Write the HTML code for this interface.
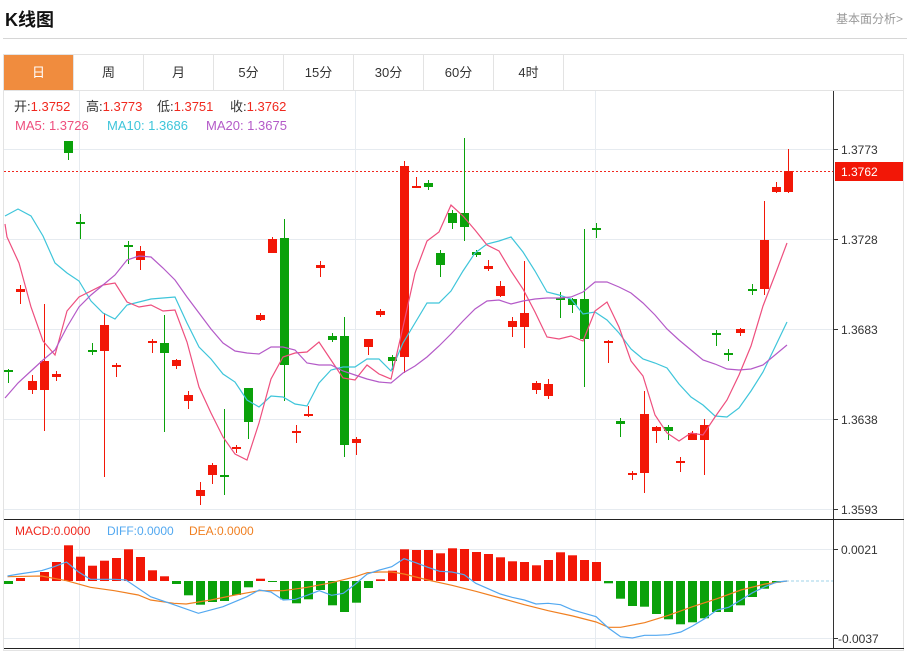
<!DOCTYPE html>
<html><head><meta charset="utf-8"><style>
*{margin:0;padding:0;box-sizing:border-box}
body{width:913px;height:651px;background:#fff;position:relative;overflow:hidden;font-family:"Liberation Sans","Noto Sans CJK SC",sans-serif;color:#333}
.t{position:absolute;white-space:nowrap}
.tab{position:absolute;top:55px;height:35px;width:70px;border-right:1px solid #e3e3e3;text-align:center;line-height:35px;font-size:13px;color:#333}
</style></head><body>
<div class="t" style="left:5px;top:6px;font-size:18px;font-weight:bold;color:#111">K线图</div>
<div class="t" style="left:836px;top:10px;font-size:12px;color:#999">基本面分析&gt;</div>
<div style="position:absolute;left:3px;top:38px;width:904px;height:1px;background:#d6d6d6"></div>
<div style="position:absolute;left:3px;top:54px;width:901px;height:597px;border:1px solid #e3e3e3"></div>
<div style="position:absolute;left:4px;top:90px;width:899px;height:1px;background:#e3e3e3"></div>
<div class="tab" style="left:4px;background:#f08c3e;color:#fff">日</div>
<div class="tab" style="left:74px">周</div>
<div class="tab" style="left:144px">月</div>
<div class="tab" style="left:214px">5分</div>
<div class="tab" style="left:284px">15分</div>
<div class="tab" style="left:354px">30分</div>
<div class="tab" style="left:424px">60分</div>
<div class="tab" style="left:494px">4时</div>
<svg id="s" width="913" height="651" style="position:absolute;left:0;top:0">
<g stroke="#e6ebf0" stroke-width="1">
<line x1="4" y1="149.5" x2="833" y2="149.5"/><line x1="4" y1="239.5" x2="833" y2="239.5"/><line x1="4" y1="329.5" x2="833" y2="329.5"/><line x1="4" y1="419.5" x2="833" y2="419.5"/><line x1="4" y1="509.5" x2="833" y2="509.5"/>
<line x1="4" y1="549.5" x2="833" y2="549.5"/><line x1="4" y1="638.5" x2="833" y2="638.5"/>
<line x1="79.5" y1="91" x2="79.5" y2="649"/><line x1="355.5" y1="91" x2="355.5" y2="649"/><line x1="595.5" y1="91" x2="595.5" y2="649"/>
</g>
<line x1="833.5" y1="91" x2="833.5" y2="649" stroke="#333"/>
<line x1="4" y1="519.5" x2="904" y2="519.5" stroke="#222"/>
<line x1="4" y1="648.5" x2="904" y2="648.5" stroke="#222"/>
<line x1="4" y1="171.5" x2="833" y2="171.5" stroke="#f0281e" stroke-dasharray="2,2"/>
<g stroke="#333"><line x1="833" y1="149.5" x2="838" y2="149.5"/><line x1="833" y1="239.5" x2="838" y2="239.5"/><line x1="833" y1="329.5" x2="838" y2="329.5"/><line x1="833" y1="419.5" x2="838" y2="419.5"/><line x1="833" y1="509.5" x2="838" y2="509.5"/><line x1="833" y1="549.5" x2="838" y2="549.5"/><line x1="833" y1="638.5" x2="838" y2="638.5"/></g>
<rect x="835" y="162" width="68" height="19" fill="#f21707"/>
<g font-size="12" fill="#333" font-family="Liberation Sans,sans-serif">
<text x="841" y="154">1.3773</text><text x="841" y="244">1.3728</text><text x="841" y="334">1.3683</text><text x="841" y="424">1.3638</text><text x="841" y="514">1.3593</text>
<text x="841" y="554">0.0021</text><text x="838" y="643">-0.0037</text>
<text x="841" y="176" fill="#fff">1.3762</text>
</g>
<g font-size="13" font-family="Liberation Sans,Noto Sans CJK SC,sans-serif">
<text x="14" y="111" fill="#333">开:<tspan fill="#f0281e">1.3752</tspan></text>
<text x="86" y="111" fill="#333">高:<tspan fill="#f0281e">1.3773</tspan></text>
<text x="157" y="111" fill="#333">低:<tspan fill="#f0281e">1.3751</tspan></text>
<text x="230" y="111" fill="#333">收:<tspan fill="#f0281e">1.3762</tspan></text>
<text x="15" y="130" fill="#ee4f7e">MA5: 1.3726</text>
<text x="107" y="130" fill="#3ec5da">MA10: 1.3686</text>
<text x="206" y="130" fill="#b45ac8">MA20: 1.3675</text>
<text x="15" y="535" fill="#f0281e" font-size="12">MACD:0.0000</text>
<text x="107" y="535" fill="#52a8f0" font-size="12">DIFF:0.0000</text>
<text x="189" y="535" fill="#f07f20" font-size="12">DEA:0.0000</text>
</g>
<line x1="786" y1="581" x2="833" y2="581" stroke="#9fd3ea" stroke-dasharray="3,2"/>
<g id="c"></g>
</svg>
<script>
var R="#f21707",G="#0aa10a",NS="http://www.w3.org/2000/svg",g=document.getElementById('c');
function el(t,a){var e=document.createElementNS(NS,t);for(var k in a)e.setAttribute(k,a[k]);g.appendChild(e);return e;}
// [bodyTop, bodyBot, wickTop, wickBot, color(1=red)]
var C=[[370,371,369,383,0],[289,292,285,304,1],[381,390,375,394,1],[361,390,304,431,1],[374,377,371,381,1],[141,153,141,160,0],[222,223,214,239,0],[350,351,343,355,0],[325,351,313,477,1],[365,367,363,377,1],[245,246,241,264,0],[251,260,246,270,1],[341,343,339,353,1],[343,353,315,432,0],[360,366,359,369,1],[395,401,391,409,1],[490,496,482,505,1],[465,475,463,484,1],[475,476,409,495,0],[447,448,445,453,1],[388,422,388,439,0],[315,320,313,321,1],[239,253,237,253,1],[238,365,219,401,0],[431,433,425,443,1],[414,415,406,417,1],[265,268,261,277,1],[336,340,333,342,0],[336,445,317,457,0],[439,443,437,455,1],[339,347,339,355,1],[311,315,309,317,1],[357,361,355,370,0],[166,357,161,373,1],[186,187,177,188,1],[183,187,180,190,0],[253,265,250,277,0],[213,223,210,229,0],[213,227,138,241,0],[252,255,250,257,0],[266,269,260,271,1],[286,296,281,297,1],[321,327,317,337,1],[313,327,261,348,1],[383,390,381,394,1],[384,396,379,399,1],[298,299,292,318,0],[299,305,298,313,0],[299,339,229,387,0],[228,229,223,238,0],[341,343,340,363,1],[421,424,418,437,0],[473,474,471,480,1],[414,473,391,493,1],[427,431,426,443,1],[427,431,425,440,0],[461,462,457,472,1],[433,440,431,440,1],[425,440,419,475,1],[333,334,330,346,0],[353,354,349,361,0],[329,333,328,336,1],[289,290,284,295,0],[240,289,201,295,1],[187,192,182,193,1],[171,192,149,193,1]];
function X(i){return 7.5+12*i;}
C.forEach(function(c,i){var x=Math.round(X(i)),col=c[4]?R:G;
el('line',{x1:x+0.5,y1:c[2],x2:x+0.5,y2:c[3],stroke:col,'stroke-width':1});
var h=Math.max(2,c[1]-c[0]);el('rect',{x:x-4,y:c[0],width:9,height:h,fill:col});});
function pl(pts,col){el('polyline',{points:pts.map(function(p){return p.join(',')}).join(' '),fill:'none',stroke:col,'stroke-width':1.2});}
pl([[5,216],[18,209],[31,216],[43,236],[55,263],[67,273],[79,281],[91,301],[103,313],[115,319],[127,305],[139,302],[151,299],[163,298],[175,297],[187,323],[199,347],[211,359],[223,374],[235,382],[247,400],[259,407],[271,396],[283,397],[295,404],[307,406],[319,383],[331,370],[343,367],[355,367],[367,359],[379,359],[391,371],[403,343],[415,323],[427,303],[439,303],[451,291],[463,271],[475,253],[487,244],[499,241],[511,237],[523,252],[535,271],[547,292],[559,295],[571,299],[583,314],[595,312],[607,320],[619,333],[631,349],[643,359],[655,363],[667,368],[679,384],[691,397],[703,405],[715,416],[727,417],[739,408],[751,391],[763,372],[775,347],[787,322]],'#3ec5da');
pl([[5,224],[7,237],[19,263],[31,307],[43,341],[55,355],[67,311],[79,297],[91,291],[103,285],[115,283],[127,302],[139,307],[151,305],[163,311],[175,310],[187,342],[199,387],[211,413],[223,437],[235,454],[247,460],[259,423],[271,379],[283,357],[295,353],[307,352],[319,342],[331,360],[343,378],[355,380],[367,365],[379,374],[391,379],[403,327],[415,273],[427,241],[439,232],[451,205],[463,216],[475,230],[487,245],[499,251],[511,271],[523,289],[535,312],[547,337],[559,339],[571,336],[583,341],[595,311],[607,302],[619,327],[631,361],[643,376],[655,415],[667,433],[679,441],[691,433],[703,435],[715,417],[727,400],[739,375],[751,346],[763,306],[775,275],[787,243]],'#ee4f7e');
pl([[5,398],[18,383],[31,371],[43,360],[55,350],[67,327],[79,307],[91,295],[103,285],[115,275],[127,260],[139,256],[151,257],[163,268],[175,280],[187,297],[199,313],[211,329],[223,343],[235,351],[247,353],[259,354],[271,347],[283,347],[295,350],[307,363],[319,365],[331,365],[343,371],[355,375],[367,379],[379,382],[391,383],[403,373],[415,366],[427,357],[439,346],[451,334],[463,321],[475,309],[487,301],[499,300],[511,304],[523,301],[535,299],[547,298],[559,298],[571,297],[583,292],[595,282],[607,282],[619,287],[631,293],[643,303],[655,315],[667,329],[679,340],[691,350],[703,360],[715,364],[727,369],[739,370],[751,369],[763,365],[775,355],[787,345]],'#b45ac8');
// MACD
var M=[584,578,581,572,562,545.3,556.7,565.7,560.7,558,549.3,557,570.3,576.3,584,595.3,604.7,602,601,595,587.3,578.7,582,599.3,603.3,599.3,590,605.3,612,602.7,588,579.3,570.7,549.3,550,550,553.3,548.3,549,552,554,557.3,561.3,562,565.3,560,552.3,555.3,560,562,583.3,598.7,606,606.7,614,619.3,624.3,622.3,618.3,612,612,605.3,597,588.7,582.7,581];
M.forEach(function(v,i){if(Math.abs(v-581)<0.5)return;var x=Math.round(X(i));var up=v<581;
el('rect',{x:x-4,y:up?v:581,width:9,height:Math.abs(v-581),fill:up?R:G});});
function mp(a){return a.map(function(p){return [(7.5+12*(p[0]-15)/20.55).toFixed(1),(500+p[1]/3).toFixed(1)];});}
pl(mp([[15,230],[73,228],[116,242],[157,262],[198,272],[239,285],[260,300],[300,310],[321,312],[363,300],[405,285],[446,272],[487,272],[528,262],[570,248],[611,230],[631,218],[652,216],[673,216],[694,222],[735,240],[776,256],[817,274],[859,294],[900,314],[941,332],[983,348],[1023,366],[1044,382],[1065,382],[1106,368],[1147,346],[1188,320],[1230,296],[1271,270],[1312,252],[1350,243]]),'#f07f20');
pl(mp([[15,228],[35,222],[73,212],[95,200],[116,186],[136,215],[157,238],[198,238],[218,240],[260,290],[300,314],[342,340],[384,320],[425,290],[446,270],[466,276],[487,300],[508,298],[528,286],[549,272],[570,286],[590,280],[611,252],[631,222],[652,210],[673,200],[694,176],[714,188],[735,202],[755,214],[776,216],[797,224],[817,250],[838,266],[859,282],[879,292],[900,300],[920,312],[941,310],[962,314],[983,330],[1003,340],[1023,350],[1044,384],[1065,410],[1085,414],[1106,406],[1126,406],[1147,404],[1168,396],[1188,378],[1209,356],[1230,330],[1250,322],[1271,300],[1291,278],[1312,260],[1333,246],[1350,243]]),'#52a8f0');
</script>
</body></html>
